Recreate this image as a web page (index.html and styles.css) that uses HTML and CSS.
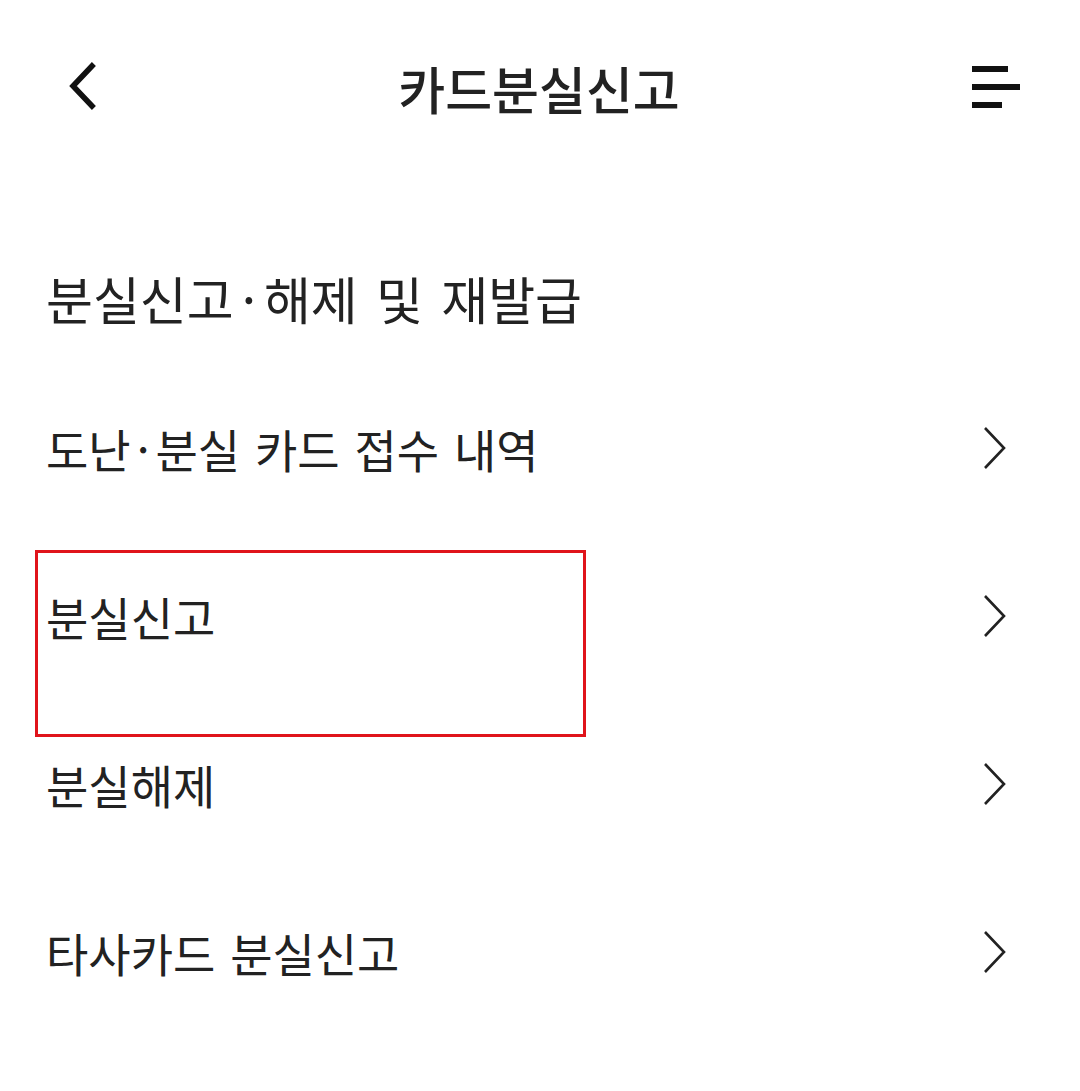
FILE: index.html
```html
<!DOCTYPE html>
<html lang="ko">
<head>
<meta charset="utf-8">
<title>카드분실신고</title>
<link rel="stylesheet" href="styles.css">
</head>
<body>
<div class="page">
  <header class="topbar">
    <button class="icon-btn back" aria-label="뒤로">
      <svg width="40" height="50" viewBox="0 0 40 50"><path d="M24 4 L5 24 L24 44" fill="none" stroke="#111" stroke-width="5.5" stroke-linecap="square"/></svg>
    </button>
    <h1 class="title">카드분실신고</h1>
    <button class="icon-btn menu" aria-label="메뉴">
      <svg width="48" height="44" viewBox="0 0 48 44"><rect x="0" y="0" width="36" height="6" fill="#111"/><rect x="0" y="18" width="48" height="6" fill="#111"/><rect x="0" y="36" width="30" height="6" fill="#111"/></svg>
    </button>
  </header>

  <h2 class="section-title">분실신고<span class="dot">·</span>해제 및 재발급</h2>

  <ul class="menu-list">
    <li class="menu-item"><span class="label">도난<span class="dot">·</span>분실 카드 접수 내역</span><svg class="chev" width="24" height="44" viewBox="0 0 24 44"><path d="M2 2 L21 22 L2 42" fill="none" stroke="#222" stroke-width="2.6"/></svg></li>
    <li class="menu-item"><span class="label">분실신고</span><svg class="chev" width="24" height="44" viewBox="0 0 24 44"><path d="M2 2 L21 22 L2 42" fill="none" stroke="#222" stroke-width="2.6"/></svg><div class="highlight"></div></li>
    <li class="menu-item"><span class="label">분실해제</span><svg class="chev" width="24" height="44" viewBox="0 0 24 44"><path d="M2 2 L21 22 L2 42" fill="none" stroke="#222" stroke-width="2.6"/></svg></li>
    <li class="menu-item"><span class="label">타사카드 분실신고</span><svg class="chev" width="24" height="44" viewBox="0 0 24 44"><path d="M2 2 L21 22 L2 42" fill="none" stroke="#222" stroke-width="2.6"/></svg></li>
  </ul>
</div>
</body>
</html>
```

FILE: styles.css
```css
* { box-sizing: border-box; }
html, body { margin: 0; padding: 0; background: #fff; }
body {
  font-family: "Noto Sans CJK KR", "Noto Sans", sans-serif;
  color: #222;
}
.page { width: 1080px; height: 1091px; position: relative; }
.topbar {
  height: 180px;
  display: flex;
  align-items: center;
  justify-content: space-between;
  padding: 0 60px 0 68px;
}
.icon-btn {
  border: none;
  background: none;
  padding: 0;
  display: flex;
  align-items: center;
}
.back { width: 40px; height: 50px; margin-top: -6px; }
.menu { margin-top: -4px; }
.title {
  margin: 0;
  font-size: 51px;
  font-weight: 500;
  line-height: 60px;
  margin-top: -4px;
  margin-left: -2px;
  color: #222;
}
.section-title {
  margin: 88px 0 0 0;
  padding-left: 46px;
  font-size: 51px;
  font-weight: 400;
  line-height: 60px;
  word-spacing: 4px;
  color: #222;
}
.section-title .dot { margin: 0 8px; }
.menu-list {
  list-style: none;
  margin: 36px 0 0 0;
  padding: 0;
}
.menu-item {
  position: relative;
  height: 168px;
  display: flex;
  align-items: center;
  justify-content: space-between;
  padding: 0 73px 0 46px;
}
.menu-item .label {
  font-size: 46px;
  font-weight: 400;
  line-height: 60px;
  word-spacing: 2px;
  color: #222;
}
.menu-item .dot { margin: 0 6px; }
.chev { display: block; }
.highlight {
  position: absolute;
  left: 35px;
  top: 18px;
  width: 551px;
  height: 187px;
  border: 3px solid #e0141b;
  pointer-events: none;
}
```
